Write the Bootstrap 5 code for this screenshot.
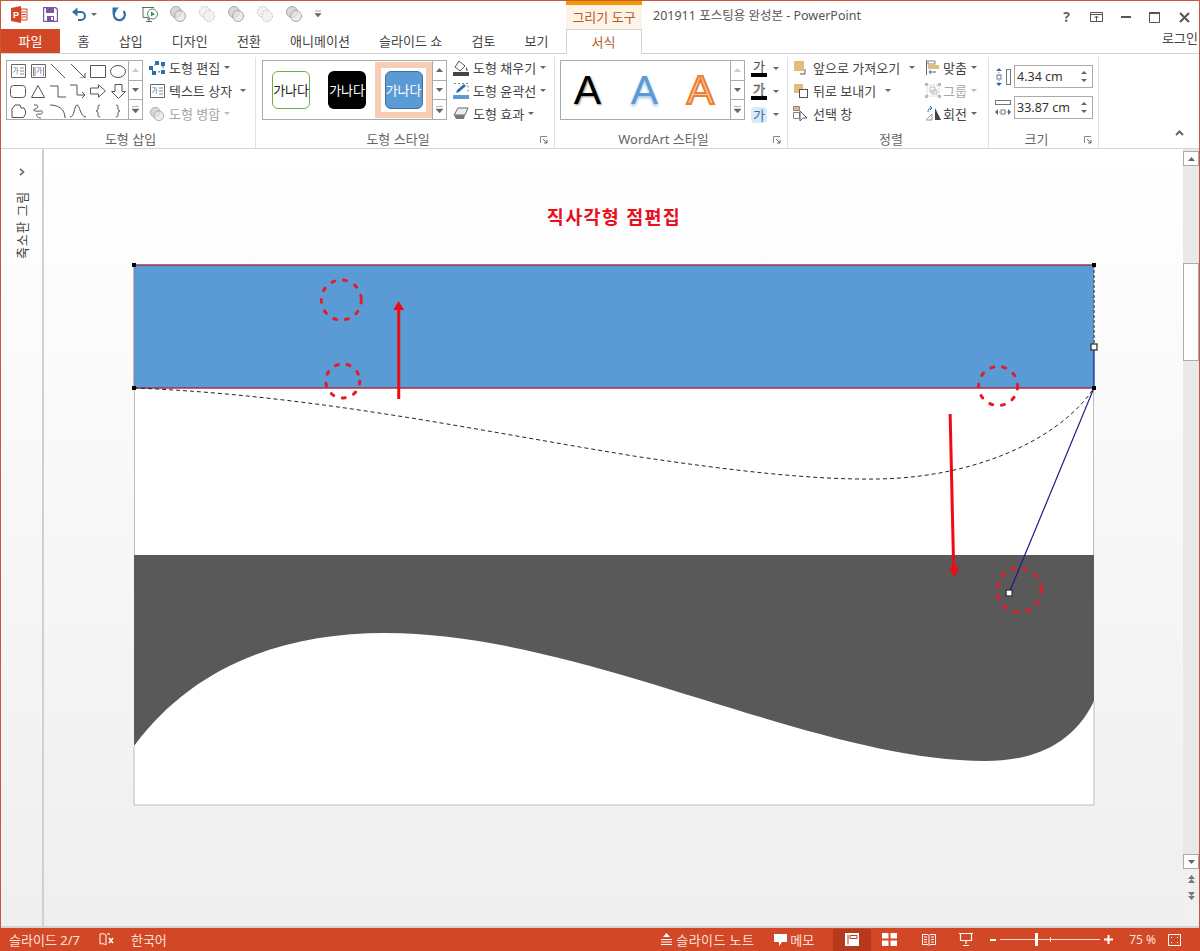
<!DOCTYPE html>
<html lang="ko">
<head>
  <meta charset="UTF-8" />
  <title>201911 포스팅용 완성본 - PowerPoint</title>
  <link href="https://cdn.jsdelivr.net/npm/bootstrap@5.3.3/dist/css/bootstrap.min.css" rel="stylesheet" />
  <style>
    html, body { height: 951px; overflow: hidden; }
    body { font-family: "Noto Sans", "Noto Sans CJK KR", sans-serif; font-size: 13px; line-height: 16px; color: #444; background: #fff; }
    svg { display: block; flex: none; }

    .app-window { width: 1200px; height: 951px; border: 1px solid #c9583a; border-bottom: 0; display: flex; flex-direction: column; }

    /* title bar */
    .title-bar { height: 27px; flex: none; }
    .qat { width: 565px; padding-left: 10px; }
    .qa-next { margin-left: 14.5px; }
    .qa-shape { margin-left: 11px; }
    .qa-first-shape { margin-left: 10px; }
    .qa-more { margin-left: 11px; }
    .context-head { width: 76px; height: 28px; border-top: 4px solid #f39800; background: #fdf3e7; color: #b7582a; text-align: center; line-height: 24px; }
    .doc-title { padding: 7px 0 0 11px; color: #555; flex-grow: 1; font-size: 12.5px; }
    .win-btns { width: 147px; padding-top: 8px; }
    .win-slot { width: 29.5px; display: flex; justify-content: center; }
    .win-help { font-size: 14px; font-weight: 700; color: #666; }

    /* tabs */
    .tab-row { height: 26px; flex: none; border-bottom: 1px solid #d4d4d4; }
    .tab-file { width: 59px; height: 24px; margin-top: 1px; background: #d24726; color: #fff; text-align: center; line-height: 24px; margin-right: 3px; }
    .ppt-tab { padding: 1px 14.6px 0; line-height: 24px; color: #444; white-space: nowrap; }
    .tab-active { width: 76px; height: 25px; margin-left: 2.5px; margin-top: 1px; border: 1px solid #d4d4d4; border-bottom: 0; background: #fff; color: #b7582a; text-align: center; line-height: 24px; }
    .login { margin-left: auto; padding-right: 1px; line-height: 20px; }

    /* ribbon */
    .ribbon { height: 95px; flex: none; border-bottom: 1px solid #d4d4d4; }
    .rib-group { height: 91px; border-right: 1px solid #e1e1e1; margin-top: 3px; display: flex; flex-direction: column; }
    .grp-shapes { width: 255px; padding-left: 5px; }
    .grp-styles { width: 299px; padding-left: 6px; }
    .grp-wordart { width: 233px; padding-left: 5px; }
    .grp-arrange { width: 201px; padding-left: 6px; }
    .grp-size { width: 110px; padding-left: 6px; }
    .rib-body { height: 69px; display: flex; }
    .rib-label { height: 22px; display: flex; align-items: flex-end; color: #666; }
    .rib-label span { flex-grow: 1; text-align: center; line-height: 17px; }
    .launcher { width: 20px; flex: none; display: flex; justify-content: center; padding-bottom: 4px; }

    .gal { height: 60px; margin-top: 3px; border: 1px solid #ababab; border-right: 0; flex: none; }
    .gal-shapes { width: 122px; display: grid; grid-template-columns: repeat(6, 20px); grid-auto-rows: 20px; padding-left: 1px; }
    .gal-shapes > div { display: flex; align-items: center; justify-content: center; }
    .gal-styles { width: 170px; display: flex; align-items: center; }
    .gal-scroll { width: 15px; height: 60px; margin-top: 3px; border: 1px solid #ababab; flex: none; display: flex; flex-direction: column; }
    .gal-scroll > div { flex: 1; display: flex; align-items: center; justify-content: center; }
    .gal-scroll > div + div { border-top: 1px solid #ababab; }

    .style-chip { width: 38px; height: 38px; border-radius: 6px; font-size: 13px; line-height: 36px; text-align: center; flex: none; white-space: nowrap; letter-spacing: -.2px; }
    .chip-green { margin-left: 9px; border: 1px solid #70ad47; background: #fff; color: #222; }
    .chip-black { margin-left: 18px; background: #000; color: #fff; line-height: 38px; }
    .chip-wrap { margin-left: 9px; width: 57px; height: 56px; border: 6px solid #f7cdb6; background: #fff; display: flex; align-items: center; justify-content: center; }
    .chip-blue { background: #5b9bd5; border: 1px solid #41719c; color: #fff; }

    .wa-letter { width: 57px; text-align: center; font-family: "Liberation Sans", sans-serif; font-size: 41px; line-height: 58px; flex: none; }
    .wa-black { color: #000; margin-left: -2px; text-shadow: 1px 1px 2px rgba(0,0,0,.45); }
    .wa-blue { color: #5b9bd5; text-shadow: 0 2px 3px rgba(91,155,213,.6); }
    .wa-orange { color: #f8cba8; -webkit-text-stroke: 2px #ed7d31; margin-left: -1px; }

    .cmd-col { display: flex; flex-direction: column; flex: none; margin-top: -1px; }
    .cmd-col-near { margin-left: 4px; }
    .cmd-col-gap { margin-left: 6px; margin-top: 0; }
    .cmd { height: 23px; display: flex; align-items: center; white-space: nowrap; color: #444; }
    .cmd-off { color: #a6a6a6; }
    .cmd-icon { width: 20px; display: flex; justify-content: center; flex: none; margin-right: 2px; }
    .cmd-icon-arr { width: 14px; margin-right: 5px; }
    .cmd-icon-fit { width: 16px; }
    .col-arrange { width: 131px; }
    .caret-down { width: 0; height: 0; border: 3px solid transparent; border-top: 3px solid #666; border-bottom: 0; margin-left: 4px; display: inline-block; flex: none; }
    .caret-wide { margin-left: 9px; }
    .caret-ga { margin-left: 6px; }
    .cmd-off .caret-down { border-top-color: #bbb; }

    .ga-mark { width: 16px; height: 17px; border-bottom: 4px solid #000; text-align: center; font-size: 13px; line-height: 13px; color: #444; }
    .ga-outline { color: #fff; -webkit-text-stroke: .6px #444; }
    .ga-glow { width: 16px; height: 16px; background: #dceaf7; border-radius: 4px; text-align: center; font-size: 13px; line-height: 16px; color: #2f6ea8; }

    .num-box { width: 79px; height: 23px; border: 1px solid #ababab; display: flex; align-items: center; padding-left: 2px; font-size: 12.5px; flex: none; color: #333; }
    .spin { margin-left: auto; width: 17px; display: flex; flex-direction: column; gap: 5px; align-items: center; }
    .spin i { width: 0; height: 0; border: 3px solid transparent; display: block; }
    .spin .s-up { border-bottom: 3px solid #666; border-top: 0; }
    .spin .s-dn { border-top: 3px solid #666; border-bottom: 0; }
    .size-row { display: flex; align-items: center; gap: 3px; height: 23px; margin-top: 8px; }
    .collapse-caret { margin-left: 76px; margin-top: 76px; }

    /* work area */
    .work { flex-grow: 1; min-height: 0; }
    .thumb-pane { width: 43px; flex: none; border-right: 2px solid #d0d0d0; border-bottom: 2px solid #d4d4d4; padding-top: 19px; background: linear-gradient(#fff, #efefef); display: flex; flex-direction: column; align-items: center; }
    .thumb-label { writing-mode: vertical-rl; text-orientation: sideways; transform: rotate(180deg); margin-top: 15px; color: #444; line-height: 14px; letter-spacing: .8px; }
    .canvas-wrap { width: 1139px; flex: none; display: flex; flex-direction: column; }
    .canvas-area { flex-grow: 1; padding: 58px 0 0 90px; background: linear-gradient(#fff, #efefef); border-bottom: 2px solid #d4d4d4; }
    .slide-title { width: 960px; height: 20px; margin-bottom: 38px; text-align: center; color: #e8101f; font-weight: 700; font-size: 18.5px; line-height: 20px; letter-spacing: 1.3px; }
    .slide-box { width: 960px; height: 540px; background: #fff; box-shadow: inset 0 0 0 1px #bdbdbd; }
    .slide-box svg { overflow: visible; }
    .v-scroll { width: 16px; margin-left: auto; flex: none; background: #f0f0f0; border-bottom: 2px solid #d4d4d4; display: flex; flex-direction: column; }
    .v-track { height: 705px; background: #e9e9e9; padding-top: 2px; }
    .v-btn { height: 15px; background: #fff; border: 1px solid #ababab; display: flex; align-items: center; justify-content: center; }
    .v-thumb { height: 98px; margin-top: 97px; background: #fff; border: 1px solid #ababab; }
    .v-prev { margin: 6px auto 0; }
    .v-next { margin: 9px auto 0; }

    /* status bar */
    .status-bar { height: 23px; flex: none; background: #d24726; color: #fbe3da; margin: 0 -1px; }
    .st-left { padding-left: 9px; }
    .st-spell { margin-left: 19px; }
    .st-lang { margin-left: 17px; }
    .st-right { margin-left: auto; height: 23px; }
    .st-txt { margin-left: 4px; letter-spacing: .4px; }
    .st-memo { margin-left: 20px; }
    .st-memo-txt { margin-left: 3px; }
    .view-on { width: 38px; height: 22px; margin-left: 19px; background: #b7391b; display: flex; align-items: center; justify-content: center; }
    .st-grid { margin-left: 11px; }
    .st-read { margin-left: 25px; }
    .st-show { margin-left: 23px; }
    .st-minus { margin-left: 17px; }
    .zoom-track { width: 100px; height: 1px; background: #fbe3da; position: relative; margin: 0 4px; }
    .zoom-knob { position: absolute; left: 35px; top: -6px; width: 3px; height: 13px; background: #fff; }
    .zoom-tick { position: absolute; left: 50px; top: -2px; width: 1px; height: 5px; background: #fbe3da; }
    .st-zoom { margin-left: 16px; font-size: 12px; }
    .st-fit { margin-left: 12px; margin-right: 19px; }
  </style>
</head>
<body>
<svg width="0" height="0" class="position-absolute">
  <symbol id="merge" viewBox="0 0 18 18"><circle cx="7" cy="7" r="5.5" fill="#d8d8d8" stroke="#a8a8a8"/><circle cx="11" cy="11" r="5.5" fill="#e6e6e6" stroke="#a8a8a8" fill-opacity=".7"/></symbol>
  <symbol id="merge-dash" viewBox="0 0 18 18"><circle cx="7" cy="7" r="5.5" fill="#f2f2f2" stroke="#b4b4b4" stroke-dasharray="1.5 1.5"/><circle cx="11" cy="11" r="5.5" fill="#f2f2f2" stroke="#b4b4b4" stroke-dasharray="1.5 1.5"/></symbol>
</svg>

<div class="app-window">
  <!-- title bar -->
  <div class="title-bar d-flex align-items-start">
    <div class="qat d-flex align-items-center pt-1">
      <svg width="17" height="17" viewBox="0 0 17 17"><path d="M0 2l10-2v17L0 15z" fill="#d24726"/><path d="M10 3h6v11h-6z" fill="#fff" stroke="#d24726"/><path d="M11 6h4M11 8.500h4M11 11h4" stroke="#d24726"/><text x="2" y="12" font-size="9" font-weight="700" fill="#fff" font-family="Liberation Sans">P</text></svg>
      <svg class="qa-next" width="15" height="15" viewBox="0 0 15 15"><path d="M.5.500h12l2 2v12H.5z" fill="#fff" stroke="#7a57a0" stroke-width="1.400"/><path d="M3 1h8v5H3z" fill="#7a57a0"/><path d="M4 9h7v5.500H4z" fill="#7a57a0"/><path d="M8 10h2v3H8z" fill="#fff"/></svg>
      <svg class="qa-next" width="15" height="14" viewBox="0 0 15 14"><path d="M2 5h7a4 4 0 0 1 0 8H6" fill="none" stroke="#2f6ea8" stroke-width="2"/><path d="M5.500.500v9L0 5z" fill="#2f6ea8"/></svg>
      <span class="caret-down"></span>
      <svg class="qa-next" width="15" height="15" viewBox="0 0 15 15"><path d="M11.500 4a5.500 5.500 0 1 1-7.500-.800" fill="none" stroke="#2f6ea8" stroke-width="2.200"/><path d="M7 .5h-6.500v6.500z" fill="#2f6ea8"/></svg>
      <svg class="qa-next" width="18" height="17" viewBox="0 0 18 17"><path d="M1 1.500h12M2 1.500v10h5M6 13h3M8 11.500V15M5 15.500h6" fill="none" stroke="#666"/><circle cx="11.500" cy="8" r="5" fill="#fff" stroke="#4e8a5d"/><path d="M10 5.500l4 2.500-4 2.500z" fill="#4e8a5d"/></svg>
      <svg class="qa-first-shape" width="18" height="18"><use href="#merge"/></svg>
      <svg class="qa-shape" width="18" height="18"><use href="#merge-dash"/></svg>
      <svg class="qa-shape" width="18" height="18"><use href="#merge"/></svg>
      <svg class="qa-shape" width="18" height="18"><use href="#merge-dash"/></svg>
      <svg class="qa-shape" width="18" height="18"><use href="#merge"/></svg>
      <svg class="qa-more" width="8" height="8" viewBox="0 0 8 8"><path d="M1 1h6M1 3.500h6l-3 3.500z" fill="#666" stroke="#666" stroke-width=".6"/></svg>
    </div>
    <div class="context-head">그리기 도구</div>
    <div class="doc-title">201911 포스팅용 완성본 - PowerPoint</div>
    <div class="win-btns d-flex align-items-center">
      <div class="win-slot win-help">?</div>
      <div class="win-slot"><svg width="13" height="10" viewBox="0 0 13 10"><path d="M.5.500h12v9H.5zM.5 2.500h12" fill="none" stroke="#555"/><path d="M6.500 4v5M4.500 6l2-2 2 2" fill="none" stroke="#555"/></svg></div>
      <div class="win-slot"><svg width="10" height="2"><rect width="10" height="2" fill="#555"/></svg></div>
      <div class="win-slot"><svg width="11" height="11" viewBox="0 0 11 11"><path d="M.5 1.500h10v9H.5z" fill="none" stroke="#555"/><rect width="11" height="2" fill="#555"/></svg></div>
      <div class="win-slot"><svg width="11" height="11" viewBox="0 0 11 11"><path d="M1 1l9 9M10 1l-9 9" stroke="#555" stroke-width="2"/></svg></div>
    </div>
  </div>

  <!-- tabs -->
  <ul class="nav tab-row flex-nowrap">
    <li class="tab-file">파일</li>
    <li class="ppt-tab">홈</li>
    <li class="ppt-tab">삽입</li>
    <li class="ppt-tab">디자인</li>
    <li class="ppt-tab">전환</li>
    <li class="ppt-tab">애니메이션</li>
    <li class="ppt-tab">슬라이드 쇼</li>
    <li class="ppt-tab">검토</li>
    <li class="ppt-tab">보기</li>
    <li class="tab-active">서식</li>
    <li class="login">로그인</li>
  </ul>

  <!-- ribbon -->
  <div class="ribbon d-flex">
    <div class="rib-group grp-shapes">
      <div class="rib-body">
        <div class="gal gal-shapes">
          <div><svg width="15" height="14" viewBox="0 0 15 14"><path d="M.5.500h14v13H.5z" fill="#fff" stroke="#666"/><text x="1.500" y="9" font-size="6.500" fill="#2f6ea8" font-family="Noto Sans CJK KR">가</text><path d="M9 4h4M9 7h4M9 10h4" stroke="#888"/></svg></div>
          <div><svg width="15" height="14" viewBox="0 0 15 14"><path d="M.5.500h14v13H.5z" fill="#fff" stroke="#666"/><text x="5" y="9" font-size="6.500" fill="#2f6ea8" font-family="Noto Sans CJK KR">가</text><path d="M2.500 3v9M4 3v9M12.500 3v9" stroke="#888"/></svg></div>
          <div><svg width="16" height="14" viewBox="0 0 16 14"><path d="M1 0l14 14" stroke="#555"/></svg></div>
          <div><svg width="16" height="14" viewBox="0 0 16 14"><path d="M1 0l14 14M15 9v5h-5" fill="none" stroke="#555"/></svg></div>
          <div><svg width="16" height="13" viewBox="0 0 16 13"><path d="M.5.500h15v12H.5z" fill="#fff" stroke="#555"/></svg></div>
          <div><svg width="16" height="13" viewBox="0 0 16 13"><ellipse cx="8" cy="6.500" rx="7.500" ry="6" fill="#fff" stroke="#555"/></svg></div>
          <div><svg width="16" height="13" viewBox="0 0 16 13"><rect x=".5" y=".5" width="15" height="12" rx="3" fill="#fff" stroke="#555"/></svg></div>
          <div><svg width="14" height="13" viewBox="0 0 14 13"><path d="M7 .5l6.500 12H.5z" fill="#fff" stroke="#555"/></svg></div>
          <div><svg width="16" height="13" viewBox="0 0 16 13"><path d="M0 1h8v11h8" fill="none" stroke="#555"/></svg></div>
          <div><svg width="16" height="14" viewBox="0 0 16 14"><path d="M0 1h7v10h8M12 8l3 3-3 3" fill="none" stroke="#555"/></svg></div>
          <div><svg width="16" height="14" viewBox="0 0 16 14"><path d="M.5 4h8V.8L15.500 7l-7 6.200V10h-8z" fill="#fff" stroke="#555"/></svg></div>
          <div><svg width="15" height="15" viewBox="0 0 15 15"><path d="M4 .5h7v7h3.500L7.500 14.500.5 7.500H4z" fill="#fff" stroke="#555"/></svg></div>
          <div><svg width="15" height="14" viewBox="0 0 15 14"><path d="M1 13.500V5l3-4h5l1 3h3l1.500 3v3l-2 3.500z" fill="#fff" stroke="#555"/></svg></div>
          <div><svg width="12" height="15" viewBox="0 0 12 15"><path d="M2 1c5-1 5 3 1 4s1 3 5 2 3 4-1 3-3 4 2 4" fill="none" stroke="#555"/></svg></div>
          <div><svg width="16" height="14" viewBox="0 0 16 14"><path d="M0 1c8 0 15 4 15 13" fill="none" stroke="#555"/></svg></div>
          <div><svg width="16" height="14" viewBox="0 0 16 14"><path d="M0 13C5 13 4 1 7 1s3 12 9 12" fill="none" stroke="#555"/></svg></div>
          <div><svg width="8" height="14" viewBox="0 0 8 14"><path d="M6 1C4 1 4 2 4 4S4 6.500 2 7C4 7.500 4 8 4 10S4 13 6 13" fill="none" stroke="#555"/></svg></div>
          <div><svg width="8" height="14" viewBox="0 0 8 14"><path d="M2 1C4 1 4 2 4 4S4 6.500 6 7C4 7.500 4 8 4 10S4 13 2 13" fill="none" stroke="#555"/></svg></div>
        </div>
        <div class="gal-scroll">
          <div><svg width="7" height="4"><path d="M3.500 0L7 4H0z" fill="#ccc"/></svg></div>
          <div><svg width="7" height="4"><path d="M0 0h7L3.500 4z" fill="#666"/></svg></div>
          <div><svg width="7" height="7"><path d="M0 .5h7M0 3h7L3.500 7z" fill="#666" stroke="#666" stroke-width=".5"/></svg></div>
        </div>
        <div class="cmd-col cmd-col-near">
          <div class="cmd"><span class="cmd-icon"><svg width="16" height="14" viewBox="0 0 16 14"><path d="M2 7l6-5 6 1 0 7-9 2z" fill="none" stroke="#555" stroke-dasharray="2 2"/><path d="M0 5h4v4H0zM6 0h4v4H6zM12 1h4v4h-4zM12 9h4v4h-4zM3 10h4v4H3z" fill="#2f6ea8"/></svg></span>도형 편집<span class="caret-down"></span></div>
          <div class="cmd"><span class="cmd-icon"><svg width="15" height="14" viewBox="0 0 15 14"><path d="M.5.500h14v13H.5z" fill="#fff" stroke="#666"/><text x="1.500" y="9" font-size="6.500" fill="#2f6ea8" font-family="Noto Sans CJK KR">가</text><path d="M9 4h4M9 7h4M9 10h4" stroke="#888"/></svg></span>텍스트 상자<span class="caret-down ms-2"></span></div>
          <div class="cmd cmd-off"><span class="cmd-icon"><svg width="16" height="16"><use href="#merge"/></svg></span>도형 병합<span class="caret-down"></span></div>
        </div>
      </div>
      <div class="rib-label"><span>도형 삽입</span></div>
    </div>

    <div class="rib-group grp-styles">
      <div class="rib-body">
        <div class="gal gal-styles">
          <div class="style-chip chip-green">가나다</div>
          <div class="style-chip chip-black">가나다</div>
          <div class="chip-wrap"><div class="style-chip chip-blue">가나다</div></div>
        </div>
        <div class="gal-scroll">
          <div><svg width="7" height="4"><path d="M3.500 0L7 4H0z" fill="#666"/></svg></div>
          <div><svg width="7" height="4"><path d="M0 0h7L3.500 4z" fill="#666"/></svg></div>
          <div><svg width="7" height="7"><path d="M0 .5h7M0 3h7L3.500 7z" fill="#666" stroke="#666" stroke-width=".5"/></svg></div>
        </div>
        <div class="cmd-col cmd-col-near">
          <div class="cmd"><span class="cmd-icon"><svg width="16" height="16" viewBox="0 0 16 16"><path d="M6 1l6 5-5 5-5-4z" fill="#fff" stroke="#555"/><path d="M13 7c2 2 2 4 1 4s-1-2-1-4z" fill="#555"/><rect y="12" width="16" height="4" fill="#444"/></svg></span>도형 채우기<span class="caret-down"></span></div>
          <div class="cmd"><span class="cmd-icon"><svg width="16" height="16" viewBox="0 0 16 16"><path d="M1 .5h14v10" fill="none" stroke="#888" stroke-dasharray="2 2"/><path d="M3 10l1-3 7-6 2 2-7 6z" fill="#2f6ea8"/><rect y="12" width="16" height="4" fill="#5b9bd5"/></svg></span>도형 윤곽선<span class="caret-down"></span></div>
          <div class="cmd"><span class="cmd-icon"><svg width="16" height="13" viewBox="0 0 16 13"><path d="M1 8l4-7h10l-3 7z" fill="#eee" stroke="#666"/><path d="M1 8h11l-1 4H3z" fill="#777"/></svg></span>도형 효과<span class="caret-down"></span></div>
        </div>
      </div>
      <div class="rib-label"><span>도형 스타일</span><div class="launcher"><svg width="8" height="8" viewBox="0 0 8 8"><path d="M.5 7V.5H7" fill="none" stroke="#888"/><path d="M3 3l4 4M7 4v3H4" fill="none" stroke="#666"/></svg></div></div>
    </div>

    <div class="rib-group grp-wordart">
      <div class="rib-body">
        <div class="gal gal-styles">
          <div class="wa-letter wa-black">A</div>
          <div class="wa-letter wa-blue">A</div>
          <div class="wa-letter wa-orange">A</div>
        </div>
        <div class="gal-scroll">
          <div><svg width="7" height="4"><path d="M3.500 0L7 4H0z" fill="#ccc"/></svg></div>
          <div><svg width="7" height="4"><path d="M0 0h7L3.500 4z" fill="#666"/></svg></div>
          <div><svg width="7" height="7"><path d="M0 .5h7M0 3h7L3.500 7z" fill="#666" stroke="#666" stroke-width=".5"/></svg></div>
        </div>
        <div class="cmd-col cmd-col-gap">
          <div class="cmd"><div class="ga-mark">가</div><span class="caret-down caret-ga"></span></div>
          <div class="cmd"><div class="ga-mark ga-outline">가</div><span class="caret-down caret-ga"></span></div>
          <div class="cmd"><div class="ga-glow">가</div><span class="caret-down caret-ga"></span></div>
        </div>
      </div>
      <div class="rib-label"><span>WordArt 스타일</span><div class="launcher"><svg width="8" height="8" viewBox="0 0 8 8"><path d="M.5 7V.5H7" fill="none" stroke="#888"/><path d="M3 3l4 4M7 4v3H4" fill="none" stroke="#666"/></svg></div></div>
    </div>

    <div class="rib-group grp-arrange">
      <div class="rib-body">
        <div class="cmd-col col-arrange">
          <div class="cmd"><span class="cmd-icon cmd-icon-arr"><svg width="14" height="14" viewBox="0 0 14 14"><rect width="10" height="10" fill="#e3bd78"/><path d="M11 8v5H6" fill="none" stroke="#555"/></svg></span>앞으로 가져오기<span class="caret-down caret-wide"></span></div>
          <div class="cmd"><span class="cmd-icon cmd-icon-arr"><svg width="14" height="14" viewBox="0 0 14 14"><rect width="9" height="9" fill="#e3bd78"/><rect x="5.500" y="5.500" width="8" height="8" fill="#fff" stroke="#555"/></svg></span>뒤로 보내기<span class="caret-down caret-wide"></span></div>
          <div class="cmd"><span class="cmd-icon cmd-icon-arr"><svg width="16" height="16" viewBox="0 0 16 16"><path d="M.5.500h6v4h-6z" fill="#e3bd78" stroke="#888"/><path d="M.5 6.500h6v6h-6z" fill="#fff" stroke="#888"/><path d="M7 5v10l3-3h4z" fill="#fff" stroke="#555"/></svg></span>선택 창</div>
        </div>
        <div class="cmd-col">
          <div class="cmd"><span class="cmd-icon cmd-icon-fit"><svg width="15" height="15" viewBox="0 0 15 15"><path d="M.5 0v15" stroke="#666"/><rect x="2" y="1" width="7" height="3" fill="#fff" stroke="#888"/><rect x="2" y="5" width="11" height="4" fill="#e3bd78"/><path d="M10 12H3M5 10l-2 2 2 2" fill="none" stroke="#2f6ea8"/></svg></span>맞춤<span class="caret-down"></span></div>
          <div class="cmd cmd-off"><span class="cmd-icon cmd-icon-fit"><svg width="16" height="15" viewBox="0 0 16 15"><path d="M2 2h12v11H2z" fill="none" stroke="#ccc" stroke-dasharray="2 1"/><path d="M5 4h5v5H5zM7 7h5v4H7z" fill="#fff" stroke="#bbb"/><path d="M0 0h3v3H0zM13 0h3v3h-3zM0 12h3v3H0zM13 12h3v3h-3z" fill="#bbb"/></svg></span>그룹<span class="caret-down"></span></div>
          <div class="cmd"><span class="cmd-icon cmd-icon-fit"><svg width="16" height="15" viewBox="0 0 16 15"><path d="M1 14l6-6v6z" fill="#fff" stroke="#999"/><path d="M10 2l6 12h-6z" fill="#444"/><path d="M3 6c0-3 2-4 4-4M5 0l2 2-2 2" fill="none" stroke="#2f6ea8"/></svg></span>회전<span class="caret-down"></span></div>
        </div>
      </div>
      <div class="rib-label"><span>정렬</span></div>
    </div>

    <div class="rib-group grp-size">
      <div class="rib-body d-block">
        <div class="size-row">
          <svg width="16" height="18" viewBox="0 0 16 18"><path d="M4 2v14" stroke="#777" stroke-dasharray="1 1"/><path d="M4 0l3 3H1zM4 18l3-3H1z" fill="#2f6ea8"/><rect x="2" y="7" width="4" height="4" fill="#fff" stroke="#777"/><rect x="11.500" y="1.500" width="4" height="15" fill="#fff" stroke="#777"/></svg>
          <div class="num-box">4.34 cm<div class="spin"><i class="s-up"></i><i class="s-dn"></i></div></div>
        </div>
        <div class="size-row">
          <svg width="16" height="18" viewBox="0 0 16 18"><rect x=".5" y="1.500" width="15" height="4" fill="#fff" stroke="#777"/><path d="M2 13h12" stroke="#777" stroke-dasharray="1 1"/><path d="M0 13l3-3v6zM16 13l-3-3v6z" fill="#2f6ea8"/><rect x="6" y="11" width="4" height="4" fill="#fff" stroke="#777"/></svg>
          <div class="num-box">33.87 cm<div class="spin"><i class="s-up"></i><i class="s-dn"></i></div></div>
        </div>
      </div>
      <div class="rib-label"><span>크기</span><div class="launcher"><svg width="8" height="8" viewBox="0 0 8 8"><path d="M.5 7V.5H7" fill="none" stroke="#888"/><path d="M3 3l4 4M7 4v3H4" fill="none" stroke="#666"/></svg></div></div>
    </div>
    <svg class="collapse-caret" width="9" height="6" viewBox="0 0 9 6"><path d="M1 5l3.500-3.500L8 5" fill="none" stroke="#666" stroke-width="2"/></svg>
  </div>

  <!-- work area -->
  <div class="work d-flex">
    <div class="thumb-pane">
      <svg width="6" height="8" viewBox="0 0 6 8"><path d="M1 .8L4.500 4 1 7.200" fill="none" stroke="#666" stroke-width="1.600"/></svg>
      <div class="thumb-label">축소판 그림</div>
    </div>
    <div class="canvas-wrap">
      <div class="canvas-area flex-grow-1">
        <div class="slide-title">직사각형 점편집</div>
        <div class="slide-box">
          <svg width="960" height="540" viewBox="0 0 961 540" preserveAspectRatio="none">
            <rect x="0" y="290" width="961" height="250" fill="#595959"/>
            <path d="M0 481C60 400 150 368 252 368C450 368 680 496 852 496C900 496 940 480 961 436V540H0Z" fill="#fff"/>
            <path d="M0 540H961V436M0 540V481" fill="none" stroke="#bdbdbd"/>
            <rect x="0" y="0" width="961" height="123" fill="#5b9bd5"/>
            <path d="M0 0H961M0 123H961" stroke="#a5304a" stroke-width="1.500"/>
            <path d="M0 0V123" stroke="#8a7f95" stroke-width="1"/>
            <path d="M961 0V82" stroke="#555" stroke-width="1.500" stroke-dasharray="3 2"/>
            <path d="M0 123C180 130 340 165 500 191C600 206 680 215 745 214C850 212 930 170 961 123" fill="none" stroke="#222" stroke-width="1" stroke-dasharray="4 3"/>
            <path d="M961 82V123L876 328" fill="none" stroke="#1c1c8c" stroke-width="1.200"/>
            <g fill="none" stroke="#e41b2c" stroke-width="3" stroke-linecap="round" stroke-dasharray="3 9">
              <circle cx="207.500" cy="35" r="20"/>
              <circle cx="209" cy="116" r="17"/>
              <circle cx="865" cy="121" r="19.500"/>
              <circle cx="886" cy="325" r="22"/>
            </g>
            <path d="M265 134V44" stroke="#ee0c14" stroke-width="3"/>
            <path d="M265 36l5.500 9h-11z" fill="#ee0c14"/>
            <path d="M817 149L820.500 303" stroke="#ee0c14" stroke-width="3"/>
            <path d="M821 312l-5.500-10h11z" fill="#ee0c14"/>
            <g fill="#000">
              <rect x="-2" y="-2" width="4" height="4"/><rect x="959" y="-2" width="4" height="4"/>
              <rect x="-2" y="121" width="4" height="4"/><rect x="959" y="121" width="4" height="4"/>
            </g>
            <rect x="958" y="79" width="6" height="6" fill="#fff" stroke="#333" stroke-width="1.300"/>
            <rect x="873" y="325" width="6" height="6" fill="#fff" stroke="#333" stroke-width="1.300"/>
          </svg>
        </div>
      </div>
    </div>
    <div class="v-scroll">
      <div class="v-track">
        <div class="v-btn"><svg width="7" height="4"><path d="M3.500 0L7 4H0z" fill="#666"/></svg></div>
        <div class="v-thumb"></div>
      </div>
      <div class="v-btn"><svg width="7" height="4"><path d="M0 0h7L3.500 4z" fill="#666"/></svg></div>
      <svg class="v-prev" width="7" height="8" viewBox="0 0 7 8"><path d="M3.500 0L7 4H0zM3.500 4L7 8H0z" fill="#777"/></svg>
      <svg class="v-next" width="7" height="8" viewBox="0 0 7 8"><path d="M0 0h7L3.500 4zM0 4h7L3.500 8z" fill="#777"/></svg>
    </div>
  </div>

  <!-- status bar -->
  <div class="status-bar d-flex align-items-center">
    <div class="st-left d-flex align-items-center">
      <span>슬라이드 2/7</span>
      <svg class="st-spell" width="15" height="13" viewBox="0 0 15 13"><path d="M7 2C5 .5 3 .5 1 1v10c2-.5 4-.5 6 1V2zM8 1h3" fill="none" stroke="#fff"/><path d="M10 5l4 5M14 5l-4 5" stroke="#fff" stroke-width="1.500"/></svg>
      <span class="st-lang">한국어</span>
    </div>
    <div class="st-right d-flex align-items-center">
      <svg width="11" height="13" viewBox="0 0 11 13"><path d="M5.500 0L9 4H2z" fill="#fff"/><path d="M0 6.500h11M0 9h11M0 11.500h11" stroke="#fff"/></svg>
      <span class="st-txt">슬라이드 노트</span>
      <svg class="st-memo" width="13" height="12" viewBox="0 0 13 12"><path d="M0 0h13v8H8l-3 4V8H0z" fill="#fff"/></svg>
      <span class="st-memo-txt">메모</span>
      <div class="view-on"><svg width="14" height="13" viewBox="0 0 14 13"><rect width="14" height="13" fill="#fff"/><path d="M3 1.500v10M5 2.500h7v3H5z" fill="none" stroke="#b7391b"/></svg></div>
      <svg class="st-grid" width="15" height="13" viewBox="0 0 15 13"><path d="M0 0h6.500v5.500H0zM8.500 0H15v5.500H8.500zM0 7.500h6.500V13H0zM8.500 7.500H15V13H8.500z" fill="#fff"/></svg>
      <svg class="st-read" width="14" height="13" viewBox="0 0 14 13"><path d="M.5 1.500h5.500l1 1 1-1h5.500v10H8l-1 1-1-1H.5zM7 2.500v9M2 4h3M2 6.500h3M2 9h3M9 4h3M9 6.500h3M9 9h3" fill="none" stroke="#fff"/></svg>
      <svg class="st-show" width="14" height="13" viewBox="0 0 14 13"><path d="M0 .5h14M1.500 1v6.500h11V1M7 8v3M4 12.500h6" fill="none" stroke="#fff" stroke-width="1.200"/></svg>
      <svg class="st-minus" width="6" height="2"><rect width="6" height="2" fill="#fff"/></svg>
      <div class="zoom-track"><div class="zoom-knob"></div><div class="zoom-tick"></div></div>
      <svg width="9" height="9" viewBox="0 0 9 9"><path d="M3.500 0h2v3.500H9v2H5.500V9h-2V5.500H0v-2h3.500z" fill="#fff"/></svg>
      <span class="st-zoom">75 %</span>
      <svg class="st-fit" width="13" height="12" viewBox="0 0 13 12"><path d="M.5.500h12v11H.5z" fill="none" stroke="#fff"/><path d="M3 3h1v1H3zM9 3h1v1H9zM3 8h1v1H3zM9 8h1v1H9z" fill="#fff"/></svg>
    </div>
  </div>
</div>
</body>
</html>
